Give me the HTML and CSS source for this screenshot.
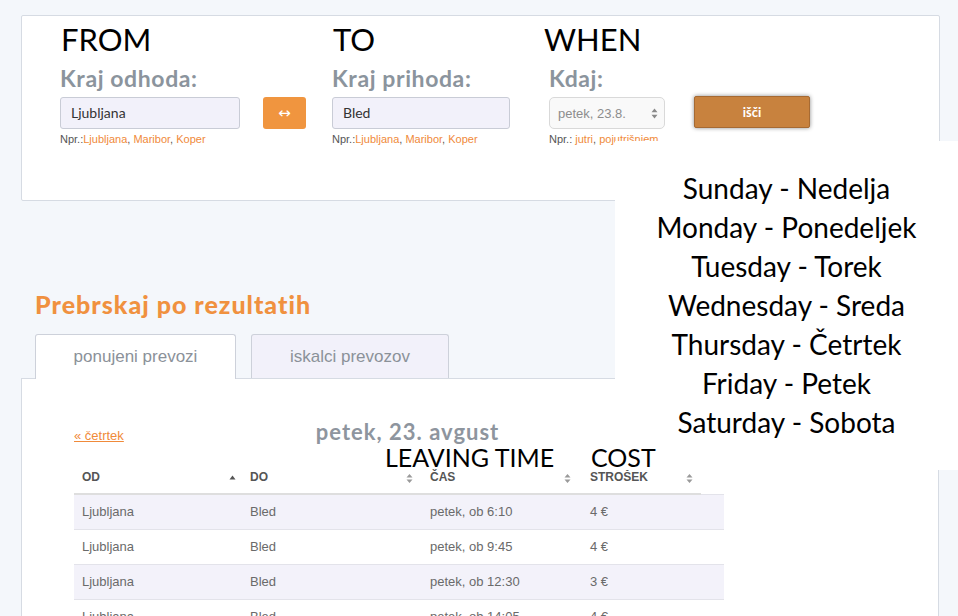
FILE: index.html
```html
<!DOCTYPE html>
<html lang="sl">
<head>
<meta charset="utf-8">
<title>Prevozi</title>
<link rel="stylesheet" href="styles.css">
</head>
<body>
<div class="page">
  <section class="search-card">
    <div class="search-row">
      <div class="field f-from">
        <div class="annot">FROM</div>
        <div class="flabel">Kraj odhoda:</div>
        <div class="input">Ljubljana</div>
        <div class="hint">Npr.:<a>Ljubljana</a>, <a>Maribor</a>, <a>Koper</a></div>
      </div>
      <div class="btn-col c-swap">
        <button class="swap">&#8596;</button>
      </div>
      <div class="field f-to">
        <div class="annot">TO</div>
        <div class="flabel">Kraj prihoda:</div>
        <div class="input">Bled</div>
        <div class="hint">Npr.:<a>Ljubljana</a>, <a>Maribor</a>, <a>Koper</a></div>
      </div>
      <div class="field f-when">
        <div class="annot annot-when">WHEN</div>
        <div class="flabel">Kdaj:</div>
        <div class="select"><span>petek, 23.8.</span>
          <svg class="sel-arrows" width="7" height="11" viewBox="0 0 7 11"><path d="M3.5 0.5 L6.5 4.2 H0.5 Z M3.5 10.5 L6.5 6.8 H0.5 Z" fill="#8a8a8a"/></svg>
        </div>
        <div class="hint">Npr.: <a>jutri</a>, <a>pojutrišnjem</a></div>
      </div>
      <div class="btn-col c-search">
        <button class="search">išči</button>
      </div>
    </div>
  </section>

  <h2 class="results-title">Prebrskaj po rezultatih</h2>
  <div class="tabs">
    <div class="tab active">ponujeni prevozi</div>
    <div class="tab">iskalci prevozov</div>
  </div>
  <section class="results-card">
    <div class="day-nav">
      <a class="prev">« četrtek</a>
      <div class="day-title">petek, 23. avgust</div>
    </div>
    <table class="rides">
      <thead>
        <tr>
          <th class="c1"><span>OD</span><svg class="sort" width="7" height="5" viewBox="0 0 7 5"><path d="M3.5 0.5 L6.5 4.5 H0.5 Z" fill="#555"/></svg></th>
          <th class="c2"><span>DO</span><svg class="sort" width="7" height="11" viewBox="0 0 7 11"><path d="M3.5 1 L6.5 4.6 H0.5 Z M3.5 10 L6.5 6.4 H0.5 Z" fill="#9a9a9a"/></svg></th>
          <th class="c3"><span>ČAS</span><svg class="sort" width="7" height="11" viewBox="0 0 7 11"><path d="M3.5 1 L6.5 4.6 H0.5 Z M3.5 10 L6.5 6.4 H0.5 Z" fill="#9a9a9a"/></svg></th>
          <th class="c4"><span>STROŠEK</span><svg class="sort" width="7" height="11" viewBox="0 0 7 11"><path d="M3.5 1 L6.5 4.6 H0.5 Z M3.5 10 L6.5 6.4 H0.5 Z" fill="#9a9a9a"/></svg></th>
          <th class="c5"></th>
        </tr>
      </thead>
      <tbody>
        <tr class="odd"><td>Ljubljana</td><td>Bled</td><td>petek, ob 6:10</td><td>4 €</td><td></td></tr>
        <tr><td>Ljubljana</td><td>Bled</td><td>petek, ob 9:45</td><td>4 €</td><td></td></tr>
        <tr class="odd"><td>Ljubljana</td><td>Bled</td><td>petek, ob 12:30</td><td>3 €</td><td></td></tr>
        <tr><td>Ljubljana</td><td>Bled</td><td>petek, ob 14:05</td><td>4 €</td><td></td></tr>
        <tr class="odd"><td>Ljubljana</td><td>Bled</td><td>petek, ob 16:00</td><td>4 €</td><td></td></tr>
      </tbody>
    </table>
  </section>

  <div class="days">
    <div>Sunday - Nedelja</div>
    <div>Monday - Ponedeljek</div>
    <div>Tuesday - Torek</div>
    <div>Wednesday - Sreda</div>
    <div>Thursday - Četrtek</div>
    <div>Friday - Petek</div>
    <div>Saturday - Sobota</div>
  </div>
  <div class="note note-leaving">LEAVING TIME</div>
  <div class="note note-cost">COST</div>
</div>
</body>
</html>
```

FILE: styles.css
```css
* { box-sizing: border-box; }
html, body { margin: 0; padding: 0; overflow: hidden; }
body { background: #f4f7fb; font-family: "Liberation Sans", Arial, sans-serif; }
.page { position: relative; width: 958px; height: 616px; overflow: hidden; }

/* search card */
.search-card {
  margin: 15px 0 0 21px;
  width: 919px;
  height: 186px;
  background: #fff;
  border: 1px solid #d6dbe3;
  border-radius: 2px;
  padding: 5px 0 0 38px;
}
.search-row { display: flex; align-items: flex-start; }
.field { display: flex; flex-direction: column; }
.f-from { width: 203px; }
.f-from .input { width: 180px; }
.c-swap { width: 69px; padding-top: 76px; }
.f-to { width: 217px; }
.f-to .input { width: 178px; }
.f-when { width: 145px; }
.c-search { width: 116px; padding-top: 75px; }

.annot {
  height: 43px;
  font-family: Lato, "Noto Sans", sans-serif;
  font-size: 31px;
  line-height: 37px;
  color: #000;
  margin-left: 1px;
}
.annot-when { margin-left: -5px; }
.flabel {
  height: 33px;
  font-family: Lato, "Noto Sans", sans-serif;
  font-weight: 700;
  font-size: 23px;
  line-height: 28px;
  letter-spacing: 0.6px;
  color: #8b949d;
}
.input {
  height: 32px;
  background: #f2f1fa;
  border: 1px solid #c9ccd6;
  border-radius: 3px;
  padding: 0 10px;
  font-family: Lato, "Noto Sans", sans-serif;
  font-size: 14px;
  line-height: 30px;
  color: #333;
}
.select {
  width: 116px;
  height: 32px;
  background: #f9f9f9;
  border: 1px solid #d9d9d9;
  border-radius: 5px;
  padding: 0 6px 0 8px;
  display: flex;
  align-items: center;
  justify-content: space-between;
  font-size: 13px;
  color: #8d8d8d;
}
.hint {
  margin-top: 3px;
  font-size: 11px;
  line-height: 14px;
  color: #555;
  white-space: nowrap;
}
.hint a { color: #f08a3a; }

.swap {
  width: 43px;
  height: 32px;
  border: none;
  border-radius: 3px;
  background: #f0953f;
  color: #fff;
  font-size: 15px;
  padding: 0;
  font-family: "DejaVu Sans", sans-serif;
}
.search {
  width: 116px;
  height: 32px;
  border: 1px solid #a66a33;
  border-radius: 2px;
  background: #c8823e;
  color: #fff;
  font-family: Lato, "Noto Sans", sans-serif;
  font-weight: 700;
  font-size: 13px;
  box-shadow: 0 0 4px rgba(0,0,0,0.45);
  padding: 0;
}

/* results */
.results-title {
  margin: 89px 0 0 35px;
  font-family: Lato, "Noto Sans", sans-serif;
  font-weight: 900;
  font-size: 25px;
  line-height: 29px;
  color: #f0913f;
  letter-spacing: 1px;
}
.tabs {
  display: flex;
  align-items: flex-start;
  gap: 15px;
  margin: 15px 0 0 35px;
  position: relative;
  z-index: 2;
}
.tab {
  width: 198px;
  height: 44px;
  border: 1px solid #cdd1da;
  border-bottom: none;
  border-radius: 3px 3px 0 0;
  background: #f2f1fa;
  text-align: center;
  padding-top: 12px;
  font-size: 17px;
  line-height: 20px;
  color: #8b9199;
}
.tab.active { width: 201px; height: 45px; background: #fff; }

.results-card {
  position: relative;
  z-index: 1;
  margin: -1px 0 0 21px;
  width: 918px;
  height: 260px;
  background: #fff;
  border: 1px solid #d6dbe3;
  padding: 40px 0 0 52px;
}
.day-nav { display: flex; align-items: baseline; width: 650px; height: 27px; }
.prev {
  font-size: 13px;
  color: #f08a3a;
  text-decoration: underline;
}
.day-title {
  margin-left: 192px;
  font-family: Lato, "Noto Sans", sans-serif;
  font-weight: 700;
  font-size: 22px;
  line-height: 26px;
  letter-spacing: 1px;
  color: #8e959e;
}

.rides { border-collapse: collapse; width: 650px; table-layout: fixed; }
.rides th {
  height: 48px;
  padding: 0 0 8px 8px;
  vertical-align: bottom;
  text-align: left;
  font-size: 12px;
  line-height: 15px;
  font-weight: 700;
  color: #555;
  border-bottom: 2px solid #dedede;
}
.rides th span { float: left; }
.rides th .sort { float: right; margin-top: 3px; }
.rides th.c1 { width: 168px; padding-right: 6px; }
.rides th.c1 .sort { margin-top: 5px; }
.rides th.c2 { width: 180px; padding-right: 9px; }
.rides th.c3 { width: 160px; padding-right: 11px; }
.rides th.c4 { width: 119px; padding-right: 8px; }
.rides th.c5 { width: 23px; border-bottom: none; }
.rides td {
  height: 35px;
  padding: 1px 0 0 8px;
  border-top: 1px solid #e3e3ea;
  font-size: 13px;
  line-height: 16px;
  color: #6a6a6a;
  white-space: nowrap;
}
.rides tr.odd td { background: #f3f2fa; }

/* overlay annotations */
.days {
  position: absolute;
  left: 615px;
  top: 141px;
  width: 343px;
  height: 329px;
  background: #fff;
  z-index: 5;
  padding-top: 28px;
  text-align: center;
  font-family: Lato, "Noto Sans", sans-serif;
  font-size: 28px;
  line-height: 39px;
  color: #000;
}
.note {
  position: absolute;
  z-index: 5;
  font-family: Lato, "Noto Sans", sans-serif;
  font-size: 25px;
  line-height: 28px;
  color: #000;
}
.note-leaving { left: 385px; top: 443px; }
.note-cost { left: 591px; top: 443px; }
```
